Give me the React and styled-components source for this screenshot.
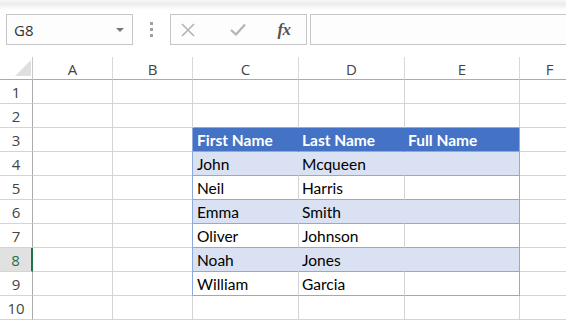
import React from "react";
import styled, { createGlobalStyle } from "styled-components";

const Global = createGlobalStyle`
  html, body { margin: 0; padding: 0; background: #fff; overflow: hidden; }
  body { font-family: "Open Sans", "Noto Sans", sans-serif; }
`;

const Page = styled.div`
  width: 566px;
  height: 321px;
  overflow: hidden;
  display: flex;
  flex-direction: column;
  background: #fff;
`;

const TopShade = styled.div`
  height: 10px;
  flex: none;
  background: linear-gradient(to bottom, #f7f7f7 0%, #ececec 40%, #ffffff 100%);
`;

const Toolbar = styled.div`
  height: 46px;
  flex: none;
  display: flex;
  align-items: flex-start;
  padding: 4px 0 0 6px;
  box-sizing: border-box;
  overflow: hidden;
  & > * { flex: none; }
`;

const NameBox = styled.div`
  width: 127px;
  height: 31px;
  box-sizing: border-box;
  border: 1px solid #c6c6c6;
  background: #fdfdfd;
  display: flex;
  align-items: center;
  justify-content: space-between;
  padding: 0 8px 0 7px;
  font-family: "Open Sans", sans-serif;
  font-size: 15px;
  color: #333;
`;

const Caret = styled.span`
  width: 0;
  height: 0;
  border-left: 4px solid transparent;
  border-right: 4px solid transparent;
  border-top: 4px solid #777;
`;

const Grip = styled.div`
  width: 37px;
  height: 31px;
  display: flex;
  flex-direction: column;
  align-items: center;
  justify-content: center;
  gap: 3px;
`;

const Dot = styled.span`
  width: 3px;
  height: 3px;
  background: #a0a0a0;
`;

const FxBox = styled.div`
  width: 137px;
  height: 31px;
  box-sizing: border-box;
  border: 1px solid #c6c6c6;
  background: #fdfdfd;
  display: grid;
  grid-template-columns: 34px 66px 26px;
  align-items: center;
  justify-items: center;
`;

const Fx = styled.span`
  font-family: "Liberation Serif", "DejaVu Serif", serif;
  font-style: italic;
  font-weight: 700;
  font-size: 17px;
  color: #555;
  letter-spacing: -0.5px;
`;

const FormulaBar = styled.div`
  margin-left: 3px;
  width: 260px;
  height: 31px;
  box-sizing: border-box;
  border: 1px solid #c6c6c6;
  border-right: none;
  background: #fdfdfd;
`;

const Sheet = styled.div`
  display: grid;
  grid-template-columns: 33px 80px 80px 106px 106px 115px 60px;
  grid-auto-rows: 24px;
`;

const Corner = styled.div`
  position: relative;
  height: 23px;
  align-self: end;
  box-sizing: border-box;
  border-right: 1px solid #c8c8c8;
  border-bottom: 1px solid #ababab;
  &::after {
    content: "";
    position: absolute;
    right: 1px;
    bottom: 3px;
    width: 0;
    height: 0;
    border-left: 16px solid transparent;
    border-bottom: 16px solid #dfdfdf;
  }
`;

const ColHead = styled.div`
  height: 23px;
  align-self: end;
  box-sizing: border-box;
  border-right: 1px solid #d9d9d9;
  border-bottom: 1px solid #ababab;
  display: flex;
  align-items: center;
  justify-content: center;
  font-family: "Open Sans", sans-serif;
  font-size: 15px;
  color: #444;
  padding-top: 1px;
`;

const RowHead = styled.div`
  box-sizing: border-box;
  border-bottom: 1px solid #d4d4d4;
  border-right: ${(p) => (p.$active ? "2px solid #217346" : "1px solid #ababab")};
  background: ${(p) => (p.$active ? "#e1e1e1" : "#fff")};
  color: ${(p) => (p.$active ? "#217346" : "#444")};
  display: flex;
  align-items: center;
  justify-content: center;
  font-family: "Open Sans", sans-serif;
  font-size: 15px;
`;

const Cell = styled.div`
  box-sizing: border-box;
  border-right: 1px solid
    ${(p) => (p.$edge ? "#8ea9db" : p.$fill ? "transparent" : "#d4d4d4")};
  border-bottom: 1px solid ${(p) => (p.$tb ? "#8ea9db" : "#d4d4d4")};
  border-left: ${(p) => (p.$left ? "1px solid #8ea9db" : "none")};
  margin-left: ${(p) => (p.$left ? "-1px" : "0")};
  background: ${(p) =>
    p.$head ? "#4472c4" : p.$band ? "#d9e1f2" : "#fff"};
  color: ${(p) => (p.$head ? "#fff" : "#000")};
  font-weight: ${(p) => (p.$head ? 700 : 400)};
  font-family: "Lato", "Open Sans", sans-serif;
  font-size: 15.5px;
  display: flex;
  align-items: center;
  padding-left: ${(p) => (p.$left ? "4px" : "3px")};
  white-space: nowrap;
  overflow: visible;
`;

const cols = ["A", "B", "C", "D", "E", "F"];
const table = [
  ["First Name", "Last Name", "Full Name"],
  ["John", "Mcqueen", ""],
  ["Neil", "Harris", ""],
  ["Emma", "Smith", ""],
  ["Oliver", "Johnson", ""],
  ["Noah", "Jones", ""],
  ["William", "Garcia", ""],
];

function XIcon() {
  return (
    <svg width="14" height="14" viewBox="0 0 14 14">
      <path d="M1 1 L13 13 M13 1 L1 13" stroke="#b4b4b4" strokeWidth="1.6" fill="none" />
    </svg>
  );
}

function CheckIcon() {
  return (
    <svg width="16" height="13" viewBox="0 0 16 13">
      <path d="M1 7 L6 11.5 L15 1.5" stroke="#b4b4b4" strokeWidth="2.2" fill="none" />
    </svg>
  );
}

export default function App() {
  const rows = [];
  for (let r = 1; r <= 10; r++) {
    const cells = [];
    cells.push(
      <RowHead key="h" $active={r === 8}>
        {r}
      </RowHead>
    );
    cols.forEach((c, ci) => {
      const ti = r - 3;
      const inTable = ti >= 0 && ti < table.length && ci >= 2 && ci <= 4;
      if (inTable) {
        const head = ti === 0;
        const band = ti % 2 === 1;
        cells.push(
          <Cell
            key={c}
            $head={head}
            $band={band}
            $fill={head || band}
            $edge={ci === 4}
            $left={ci === 2}
            $tb
          >
            {table[ti][ci - 2]}
          </Cell>
        );
      } else {
        const aboveTable = r === 2 && ci >= 2 && ci <= 4;
        cells.push(<Cell key={c} $tb={aboveTable} />);
      }
    });
    rows.push(<React.Fragment key={r}>{cells}</React.Fragment>);
  }

  return (
    <Page>
      <Global />
      <TopShade />
      <Toolbar>
        <NameBox>
          <span>G8</span>
          <Caret />
        </NameBox>
        <Grip>
          <Dot />
          <Dot />
          <Dot />
        </Grip>
        <FxBox>
          <XIcon />
          <CheckIcon />
          <Fx>fx</Fx>
        </FxBox>
        <FormulaBar />
      </Toolbar>
      <Sheet>
        <Corner />
        {cols.map((c) => (
          <ColHead key={c}>{c}</ColHead>
        ))}
        {rows}
      </Sheet>
    </Page>
  );
}
